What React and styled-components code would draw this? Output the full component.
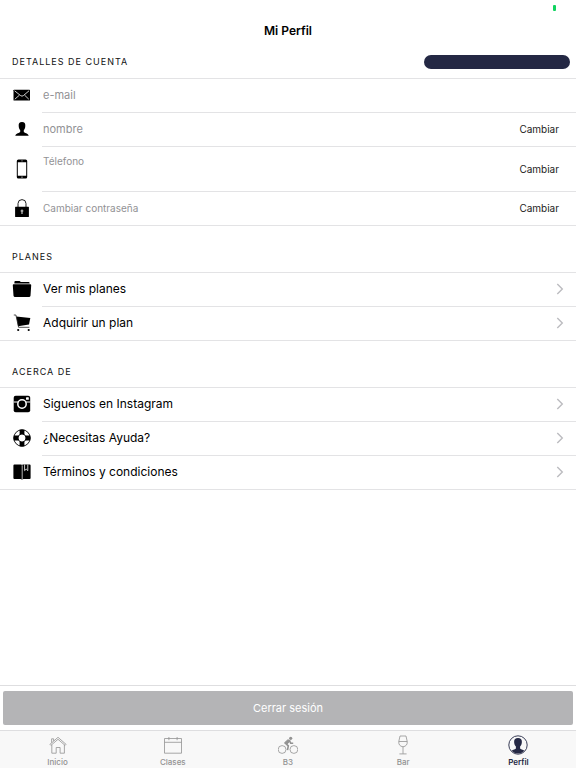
import styled, { createGlobalStyle } from "styled-components";

const GlobalStyle = createGlobalStyle`
  * {
    box-sizing: border-box;
  }
  body {
    margin: 0;
    background-color: #fff;
    color: #111;
    font-family: Inter, "Liberation Sans", sans-serif;
  }
  a {
    text-decoration: none;
  }
`;

const Page = styled.div`
  display: flex;
  flex-direction: column;
  min-height: 100vh;
`;

const StatusBar = styled.div`
  display: flex;
  justify-content: flex-end;
  align-items: center;
  height: 16px;
  padding-right: 20px;
`;

const Battery = styled.span`
  width: 3px;
  height: 6px;
  border-radius: 1px;
  background-color: #0fd35f;
`;

const Title = styled.h1`
  margin: 0;
  font-size: 12px;
  font-weight: 600;
  line-height: 30px;
  text-align: center;
  color: #000;
`;

const Main = styled.main`
  flex: 1;
`;

const Section = styled.section`
  & + & {
    padding-top: 16px;
  }
`;

const SectionHeader = styled.div`
  display: flex;
  justify-content: space-between;
  align-items: center;
  height: ${(props) => (props.$tall ? 32 : 30)}px;
  padding: 0 6px 0 12px;
`;

const SectionTitle = styled.h2`
  margin: 0;
  font-size: 9px;
  font-weight: 400;
  line-height: 12px;
  letter-spacing: 1px;
  text-transform: uppercase;
`;

const Pill = styled.span`
  width: 146px;
  height: 14px;
  border-radius: 7px;
  background-color: #242844;
`;

const List = styled.ul`
  margin: 0;
  padding: 0;
  list-style: none;
  border-top: 1px solid #e3e3e5;
  border-bottom: 1px solid #e3e3e5;
`;

const Row = styled.li`
  display: grid;
  grid-template-columns: 42px 1fr;
  height: ${(props) => (props.$tall ? 45 : 34)}px;
  &:last-child {
    height: 33px;
  }
`;

const IconCell = styled.span`
  display: flex;
  justify-content: center;
  align-items: center;
  padding: 0 0 2px 1px;
  svg {
    width: 20px;
    height: 20px;
  }
`;

const RowBody = styled.div`
  display: flex;
  align-items: center;
  min-width: 0;
  padding: 0 0 1px 1px;
  border-bottom: 1px solid #e3e3e5;
  li:last-child > & {
    border-bottom: none;
  }
`;

const Field = styled.input`
  flex: 1;
  min-width: 0;
  align-self: stretch;
  padding: ${(props) => (props.$raised ? "0 0 15px" : "0")};
  border: none;
  outline: none;
  background: transparent;
  font-family: inherit;
  font-size: ${(props) => (props.$small ? 10 : 11)}px;
  &::placeholder {
    color: #929295;
    opacity: 1;
  }
`;

const ChangeButton = styled.button`
  padding: 0 17px 0 8px;
  border: none;
  background: none;
  font-family: inherit;
  font-size: 10px;
  line-height: 16px;
  color: #222;
  cursor: pointer;
`;

const RowLink = styled.a`
  display: flex;
  flex: 1;
  justify-content: space-between;
  align-items: center;
  align-self: stretch;
  padding-right: 12px;
  font-size: 12px;
  line-height: 16px;
  color: #000;
`;

const Footer = styled.footer`
  padding: 5px 3px;
  border-top: 1px solid #dedee0;
`;

const LogoutButton = styled.button`
  display: block;
  width: 100%;
  height: 34px;
  border: none;
  border-radius: 2px;
  background-color: #b4b4b6;
  color: #fff;
  font-family: inherit;
  font-size: 11px;
  cursor: pointer;
`;

const TabBar = styled.nav`
  display: flex;
  height: 38px;
  border-top: 1px solid #dedee0;
  background-color: #f8f8f8;
`;

const Tab = styled.a`
  display: flex;
  flex: 1;
  flex-direction: column;
  align-items: center;
  gap: 2px;
  padding-top: 4px;
  font-size: 8px;
  font-weight: ${(props) => (props.$active ? 600 : 500)};
  line-height: 10px;
  color: ${(props) => (props.$active ? "#242844" : "#929292")};
  svg {
    width: 20px;
    height: 20px;
  }
`;

const Chevron = () => (
  <svg width="8" height="12" viewBox="0 0 8 12" fill="none" stroke="#bcbcc0" strokeWidth="1.4">
    <path d="M1.3 1l5 5-5 5" />
  </svg>
);

const MailIcon = () => (
  <svg viewBox="0 0 20 20">
    <rect x="1.5" y="4.7" width="16.5" height="10.8" rx="0.6" />
    <path
      d="M2.600 5.800l6 4.800q1.400 1.100 2.800 0L17 5.800M2.800 14.200l4.600-4M16.800 14.200l-4.200-4"
      fill="none"
      stroke="#fff"
      strokeWidth="0.8"
    />
  </svg>
);

const PersonIcon = () => (
  <svg viewBox="0 0 20 20">
    <path d="M10 3c2.600 0 3.500 1.500 3.300 3.900-.1 2.200-.7 3.400-1.500 4.200v1.800c.2.900 4.600 1.300 4.900 3.800H3.300c.3-2.500 4.700-2.900 4.900-3.800v-1.800c-.8-.8-1.400-2-1.500-4.200C6.500 4.500 7.400 3 10 3z" />
  </svg>
);

const PhoneIcon = () => (
  <svg viewBox="0 0 20 20">
    <path
      fillRule="evenodd"
      d="M6.4.5h7.200q1.600 0 1.600 1.600v15.800q0 1.600-1.600 1.600H6.400q-1.600 0-1.600-1.600V2.100Q4.800.5 6.400.5zM5.800 3.200v13.500h8.400V3.200z"
    />
    <circle cx="10" cy="18.1" r="0.6" fill="#fff" />
    <path d="M9 1.900h2" stroke="#fff" strokeWidth="0.4" />
  </svg>
);

const LockIcon = () => (
  <svg viewBox="0 0 20 20">
    <path d="M6 9V5.600a4 4 0 0 1 8 0V9" fill="none" stroke="#222" strokeWidth="1" />
    <rect x="3.100" y="8.800" width="13.800" height="10.200" rx="0.500" />
    <path d="M10 11.500a1.400 1.400 0 0 1 .7 2.600v1.800H9.300v-1.800a1.400 1.400 0 0 1 .7-2.600z" fill="#aaa" />
  </svg>
);

const FolderIcon = () => (
  <svg viewBox="0 0 20 20">
    <path d="M2.400 4.600V3q0-1 1-1h4q.9 0 1.200.9h8q1 0 1 1v.7z" />
    <path d="M1.700 5.300h16.600q1 0 .9 1l-.7 10.500q-.1 1.100-1.200 1.100H2.700q-1.100 0-1.200-1.100L.8 6.300q-.1-1 .9-1z" />
  </svg>
);

const CartIcon = () => (
  <svg viewBox="0 0 20 20">
    <path d="M4.300 3.400l14 1.600-1.300 6.600-10.900 1.600z" />
    <path d="M1.800 2h2.100l2.700 12.300h10.800" fill="none" stroke="#222" strokeWidth="0.800" />
    <circle cx="6.200" cy="17" r="1.100" />
    <circle cx="16.700" cy="17" r="1.100" />
  </svg>
);

const InstagramIcon = () => (
  <svg viewBox="0 0 20 20">
    <rect x="1.700" y="1.800" width="16.500" height="16.500" rx="2" />
    <path d="M1.700 8h4.600M13.700 8h4.600" stroke="#fff" strokeWidth="1" />
    <circle cx="10" cy="10" r="4.200" fill="none" stroke="#fff" strokeWidth="1.500" />
    <rect x="14" y="3.300" width="2.800" height="2.500" rx="0.400" fill="#fff" />
  </svg>
);

const HelpIcon = () => (
  <svg viewBox="0 0 20 20" fill="none">
    <circle cx="10" cy="10" r="8.200" stroke="#000" strokeWidth="0.900" />
    <circle cx="10" cy="10" r="4" stroke="#000" strokeWidth="0.900" />
    <path
      d="M7.600 1.800Q10 1.200 12.400 1.800V6.600Q10 5.600 7.600 6.600zM7.600 18.200Q10 18.800 12.400 18.200V13.400Q10 14.400 7.600 13.400zM1.800 7.600Q1.200 10 1.800 12.400H6.600Q5.600 10 6.600 7.600zM18.200 7.600Q18.800 10 18.200 12.400H13.400Q14.400 10 13.400 7.600z"
      fill="#000"
    />
  </svg>
);

const BookIcon = () => (
  <svg viewBox="0 0 20 20">
    <path d="M2.400 2.600H9q1 0 1 .8 0-.8 1-.8h6.600q1 0 1 1v12.300q0 1-1 1h-6.100q-1 0-1.500.9-.5-.9-1.500-.9H2.400q-1 0-1-1V3.600q0-1 1-1z" />
    <path d="M10.200 3.400v14" stroke="#fff" strokeWidth="0.700" />
    <path d="M12.600 2.600v6l1.600-1.500 1.600 1.500v-6" fill="none" stroke="#fff" strokeWidth="0.800" />
  </svg>
);

const HomeIcon = () => (
  <svg viewBox="0 0 20 20" fill="none" stroke="currentColor" strokeWidth="0.800">
    <path d="M1.900 9.400L10 2.300l8.100 7.100-1 1L10 4.300l-7.100 6.100z" />
    <path d="M3.800 9.800v8.400h4.400v-5.700h3.900v5.700h4.300V9.800M3.600 7.700V3.800h2v2.100" />
  </svg>
);

const CalendarIcon = () => (
  <svg viewBox="0 0 20 20" fill="none" stroke="currentColor" strokeWidth="0.800">
    <path d="M1.500 3.500h17v14.700h-17zM1.500 7.300h17M5.900 2v3.200M14.100 2v3.200" />
  </svg>
);

const BikeIcon = () => (
  <svg viewBox="0 0 20 20" fill="none" stroke="currentColor">
    <circle cx="4.100" cy="14.500" r="3.900" strokeWidth="0.800" />
    <circle cx="15.900" cy="14.500" r="3.900" strokeWidth="0.800" />
    <circle cx="12.700" cy="3.300" r="1.600" fill="currentColor" stroke="none" />
    <path d="M6.600 7.700l3.300-2.900 2 .7-2.600 3.500-2.500-.6z" fill="currentColor" strokeWidth="1" />
    <path d="M7.800 8.700l2.500 2.200-.8 4.300M11.400 5.700l1.300 2.500h2.500" strokeWidth="1.600" />
  </svg>
);

const GlassIcon = () => (
  <svg viewBox="0 0 20 20" fill="none" stroke="currentColor" strokeWidth="0.800">
    <path d="M7 1h6l1.200 5.400q.5 4.700-4.200 5.400-4.700-.7-4.200-5.400zM5.800 6.500h8.400M10 11.800v7M6.400 18.900h7.200" />
  </svg>
);

const ProfileIcon = () => (
  <svg viewBox="0 0 20 20">
    <circle cx="10" cy="10" r="9.200" fill="none" stroke="currentColor" strokeWidth="0.900" />
    <path
      d="M10 3.100c3 0 4.200 1.700 3.800 4.600-.2 1.700-.8 3-1.700 3.800v1.900c.3.700 2.700.9 4.400 2.300a9 9 0 0 1-13 0c1.700-1.400 4.100-1.600 4.400-2.300v-1.900c-.9-.8-1.500-2.100-1.700-3.800C5.800 4.800 7 3.100 10 3.100z"
      fill="currentColor"
    />
  </svg>
);

const fields = [
  { name: "email", type: "email", label: "e-mail", icon: <MailIcon /> },
  { name: "nombre", type: "text", label: "nombre", icon: <PersonIcon />, editable: true },
  { name: "telefono", type: "tel", label: "Télefono", icon: <PhoneIcon />, editable: true, tall: true, small: true },
  { name: "password", type: "password", label: "Cambiar contraseña", icon: <LockIcon />, editable: true, small: true },
];

const sections = [
  {
    title: "Planes",
    items: [
      { label: "Ver mis planes", icon: <FolderIcon /> },
      { label: "Adquirir un plan", icon: <CartIcon /> },
    ],
  },
  {
    title: "Acerca de",
    items: [
      { label: "Siguenos en Instagram", icon: <InstagramIcon /> },
      { label: "¿Necesitas Ayuda?", icon: <HelpIcon /> },
      { label: "Términos y condiciones", icon: <BookIcon /> },
    ],
  },
];

const tabs = [
  { label: "Inicio", icon: <HomeIcon /> },
  { label: "Clases", icon: <CalendarIcon /> },
  { label: "B3", icon: <BikeIcon /> },
  { label: "Bar", icon: <GlassIcon /> },
  { label: "Perfil", icon: <ProfileIcon />, active: true },
];

export default function App() {
  return (
    <Page>
      <GlobalStyle />
      <StatusBar>
        <Battery />
      </StatusBar>
      <Title>Mi Perfil</Title>
      <Main>
        <Section>
          <SectionHeader $tall>
            <SectionTitle>Detalles de cuenta</SectionTitle>
            <Pill />
          </SectionHeader>
          <List>
            {fields.map((f) => (
              <Row key={f.name} $tall={f.tall}>
                <IconCell as="label" htmlFor={f.name}>
                  {f.icon}
                </IconCell>
                <RowBody>
                  <Field
                    id={f.name}
                    type={f.type}
                    placeholder={f.label}
                    aria-label={f.label}
                    $small={f.small}
                    $raised={f.tall}
                  />
                  {f.editable ? <ChangeButton type="button">Cambiar</ChangeButton> : null}
                </RowBody>
              </Row>
            ))}
          </List>
        </Section>
        {sections.map((s) => (
          <Section key={s.title}>
            <SectionHeader>
              <SectionTitle>{s.title}</SectionTitle>
            </SectionHeader>
            <List>
              {s.items.map((item) => (
                <Row key={item.label}>
                  <IconCell>{item.icon}</IconCell>
                  <RowBody>
                    <RowLink href="#">
                      {item.label}
                      <Chevron />
                    </RowLink>
                  </RowBody>
                </Row>
              ))}
            </List>
          </Section>
        ))}
      </Main>
      <Footer>
        <LogoutButton type="button">Cerrar sesión</LogoutButton>
      </Footer>
      <TabBar>
        {tabs.map((t) => (
          <Tab key={t.label} href="#" $active={t.active}>
            {t.icon}
            {t.label}
          </Tab>
        ))}
      </TabBar>
    </Page>
  );
}
